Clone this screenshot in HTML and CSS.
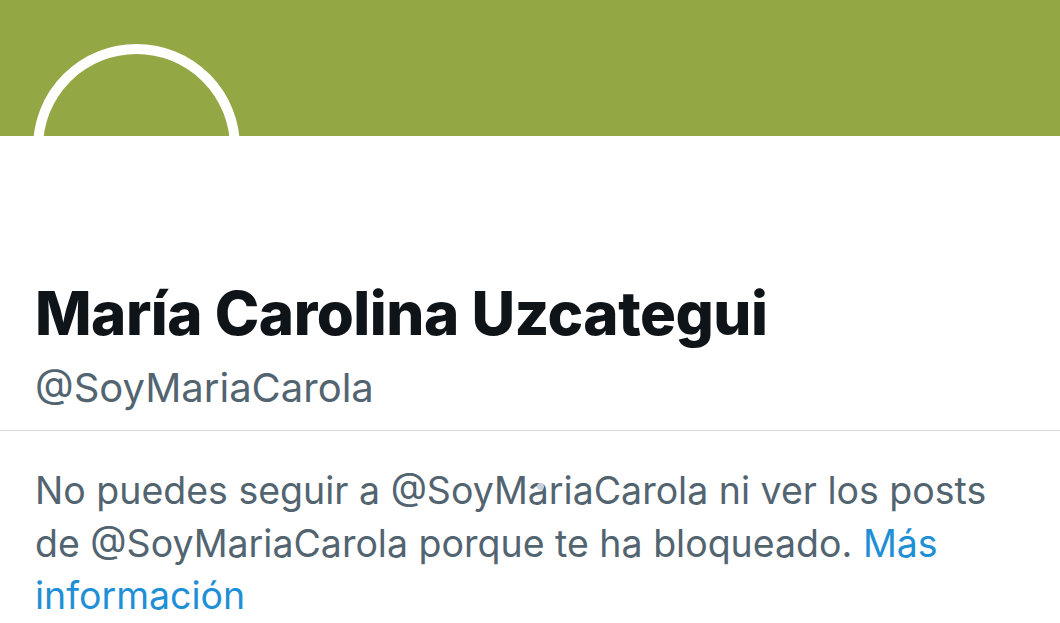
FILE: index.html
```html
<!DOCTYPE html>
<html lang="es">
<head>
<meta charset="utf-8">
<link rel="stylesheet" href="styles.css">
</head>
<body>
<div class="profile">
  <div class="banner"></div>
  <div class="avatar"></div>
  <div class="info">
    <h1 class="name">María Carolina Uzcategui</h1>
    <div class="handle">@SoyMariaCarola</div>
  </div>
  <div class="divider"></div>
  <p class="blocked">No puedes seguir a @SoyMariaCarola ni ver los posts de @SoyMariaCarola porque te ha bloqueado. <a class="more" href="#">Más información</a></p>
  <span class="touch-dot"></span>
</div>
</body>
</html>
```

FILE: styles.css
```css
html, body {
  margin: 0;
  padding: 0;
  background: #ffffff;
}
body {
  width: 1060px;
  height: 623px;
  overflow: hidden;
  font-family: "Inter", "Roboto", "Liberation Sans", sans-serif;
}
.profile {
  position: relative;
}
.banner {
  height: 136px;
  background: #93a744;
}
.avatar {
  position: absolute;
  left: 33px;
  top: 44px;
  width: 187px;
  height: 187px;
  border: 10px solid #ffffff;
  border-radius: 50%;
}
.info {
  padding: 136px 35px 0 35px;
}
.name {
  margin: 0;
  font-size: 60px;
  line-height: 82px;
  font-weight: 800;
  color: #0f1419;
  letter-spacing: -0.5px;
}
.handle {
  margin-top: 8px;
  font-size: 40px;
  line-height: 52px;
  color: #536471;
}
.divider {
  margin-top: 16px;
  height: 1px;
  background: #cfd9de;
}
.blocked {
  margin: 34px 0 0 0;
  padding: 0 35px;
  font-size: 37.5px;
  line-height: 52.5px;
  color: #536471;
}
.more {
  color: #1f8fd6;
  text-decoration: none;
}
.touch-dot {
  position: absolute;
  left: 537px;
  top: 483px;
  width: 7px;
  height: 7px;
  border-radius: 50%;
  background: #c9d1d8;
}
```
